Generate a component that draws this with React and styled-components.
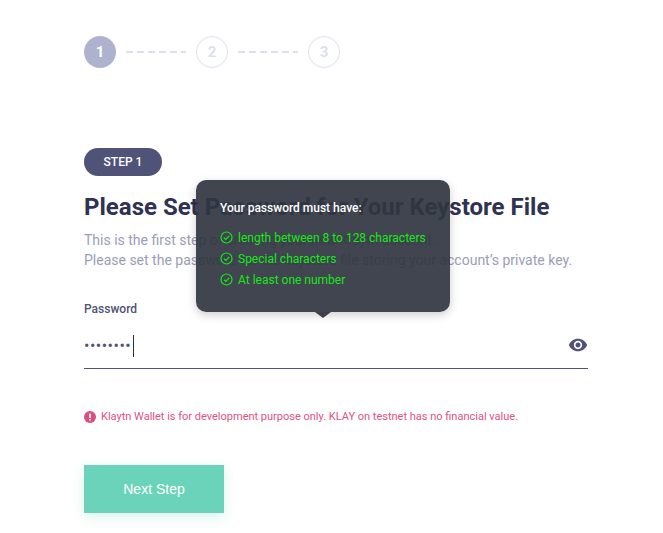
import React from 'react';
import styled, { createGlobalStyle } from 'styled-components';

const GlobalStyle = createGlobalStyle`
    html, body {
        margin: 0;
        padding: 0;
        background: #fff;
        font-family: Roboto, "Liberation Sans", sans-serif;
    }
`;

const Page = styled.div`
    width: 663px;
    height: 533px;
    box-sizing: border-box;
    padding: 36px 75px 0 84px;
    overflow: hidden;
`;

const Stepper = styled.div`
    display: flex;
    align-items: center;
    gap: 10px;
`;

const StepCircle = styled.div`
    width: 32px;
    height: 32px;
    box-sizing: border-box;
    border-radius: 50%;
    display: flex;
    align-items: center;
    justify-content: center;
    font-size: 15px;
    font-weight: 700;
    color: ${({ $active }) => ($active ? '#fff' : '#dcdfee')};
    background: ${({ $active }) => ($active ? '#adb2cf' : '#fff')};
    border: ${({ $active }) => ($active ? 'none' : '1px solid #dcdfee')};
`;

const Dashes = styled.div`
    width: 60px;
    height: 2px;
    background: repeating-linear-gradient(to right, #dcdfee 0 7px, transparent 7px 11px);
`;

const Badge = styled.div`
    width: 78px;
    height: 28px;
    margin-top: 80px;
    border-radius: 14px;
    background: #4f5378;
    color: #fff;
    font-size: 12px;
    font-weight: 500;
    display: flex;
    align-items: center;
    justify-content: center;
`;

const Title = styled.h1`
    margin: 17px 0 0;
    font-size: 24px;
    line-height: 28px;
    font-weight: 700;
    color: #2e3253;
`;

const Description = styled.p`
    margin: 9px 0 0;
    font-size: 14px;
    line-height: 20px;
    color: #9a9eb8;
`;

const Field = styled.div`
    position: relative;
    margin-top: 32px;
    width: 504px;
`;

const Label = styled.div`
    font-size: 12px;
    line-height: 14px;
    font-weight: 500;
    color: #4f5378;
`;

const InputRow = styled.div`
    display: flex;
    align-items: center;
    height: 45px;
    margin-top: 7px;
    border-bottom: 1px solid #4f5378;
`;

const PasswordInput = styled.input`
    width: 49px;
    padding: 0;
    border: none;
    outline: none;
    background: transparent;
    font-family: Roboto, sans-serif;
    font-size: 16px;
    letter-spacing: 0.5px;
    color: #4f5378;
`;

const Caret = styled.span`
    width: 1px;
    height: 22px;
    background: #2a2e4d;
`;

const EyeButton = styled.button`
    margin-left: auto;
    margin-bottom: 2px;
    padding: 0;
    width: 20px;
    height: 20px;
    border: none;
    background: none;
    color: #4f5378;
    display: flex;
    align-items: center;
    justify-content: center;
`;

const Tooltip = styled.div`
    position: absolute;
    left: 112px;
    bottom: 57px;
    width: 254px;
    height: 132px;
    box-sizing: border-box;
    padding: 20px 20px 0 24px;
    border-radius: 10px;
    background: rgba(48, 53, 64, 0.92);
    box-shadow: 0 3px 10px rgba(0, 0, 0, 0.2);

    &::after {
        content: '';
        position: absolute;
        left: 119px;
        bottom: -6px;
        border-left: 8px solid transparent;
        border-right: 8px solid transparent;
        border-top: 6px solid #3d4048;
    }
`;

const TooltipTitle = styled.div`
    font-size: 12px;
    line-height: 16px;
    font-weight: 500;
    color: #fff;
    margin-bottom: 11px;
`;

const Rule = styled.div`
    display: flex;
    align-items: center;
    gap: 5px;
    height: 21px;
    font-size: 12px;
    white-space: nowrap;
    color: #17e817;
`;

const Notice = styled.div`
    display: flex;
    align-items: center;
    gap: 5px;
    margin-top: 41px;
    font-size: 11px;
    line-height: 14px;
    color: #e0527f;
`;

const NextButton = styled.button`
    display: block;
    width: 140px;
    height: 48px;
    margin-top: 41px;
    border: none;
    background: #6bd3b9;
    color: #fff;
    font-family: "Liberation Sans", Arial, sans-serif;
    font-size: 14px;
    box-shadow: 0 4px 12px rgba(107, 211, 185, 0.25);
`;

const CheckIcon = () => (
    <svg width="13" height="13" viewBox="0 0 13 13" fill="none" stroke="currentColor" strokeWidth="1.2">
        <circle cx="6.5" cy="6.5" r="5.5" />
        <path d="M4 6.7 L5.9 8.5 L9.2 4.8" />
    </svg>
);

const EyeIcon = () => (
    <svg width="22" height="22" viewBox="0 0 24 24" fill="currentColor">
        <path d="M12 4.5C7 4.5 2.73 7.61 1 12c1.73 4.39 6 7.5 11 7.5s9.27-3.11 11-7.5c-1.73-4.39-6-7.5-11-7.5zM12 17c-2.76 0-5-2.24-5-5s2.24-5 5-5 5 2.24 5 5-2.24 5-5 5zm0-8c-1.66 0-3 1.34-3 3s1.34 3 3 3 3-1.34 3-3-1.34-3-3-3z" />
    </svg>
);

const AlertIcon = () => (
    <svg width="12" height="12" viewBox="0 0 12 12">
        <circle cx="6" cy="6" r="6" fill="#d94f7c" />
        <rect x="5.2" y="2.5" width="1.6" height="4.4" fill="#fff" />
        <rect x="5.2" y="7.9" width="1.6" height="1.6" fill="#fff" />
    </svg>
);

const rules = ['length between 8 to 128 characters', 'Special characters', 'At least one number'];

const App = () => (
    <Page>
        <GlobalStyle />
        <Stepper>
            <StepCircle $active>1</StepCircle>
            <Dashes />
            <StepCircle>2</StepCircle>
            <Dashes />
            <StepCircle>3</StepCircle>
        </Stepper>
        <Badge>STEP 1</Badge>
        <Title>Please Set Password for Your Keystore File</Title>
        <Description>
            This is the first step of creating your new Klaytn account.
            <br />
            Please set the password for the keystore file storing your account’s private key.
        </Description>
        <Field>
            <Label>Password</Label>
            <InputRow>
                <PasswordInput type="password" defaultValue="abcd1234" />
                <Caret />
                <EyeButton type="button"><EyeIcon /></EyeButton>
            </InputRow>
            <Tooltip>
                <TooltipTitle>Your password must have:</TooltipTitle>
                {rules.map((rule) => (
                    <Rule key={rule}>
                        <CheckIcon />
                        {rule}
                    </Rule>
                ))}
            </Tooltip>
        </Field>
        <Notice>
            <AlertIcon />
            Klaytn Wallet is for development purpose only. KLAY on testnet has no financial value.
        </Notice>
        <NextButton type="button">Next Step</NextButton>
    </Page>
);

export default App;
